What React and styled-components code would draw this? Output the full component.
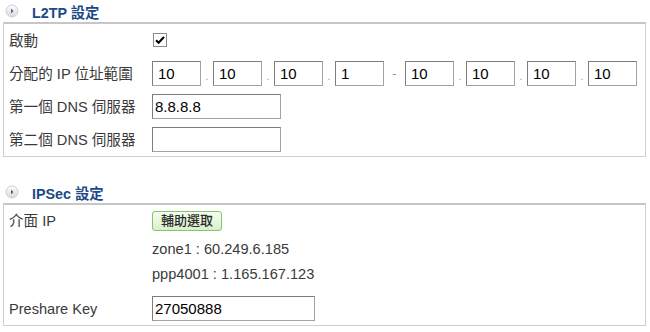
import React from 'react';
import styled, { createGlobalStyle } from 'styled-components';

const GlobalStyle = createGlobalStyle`
  body {
    margin: 0;
    background: #fff;
    font-family: "Liberation Sans", Arial, "Noto Sans CJK TC", sans-serif;
    color: #333;
  }
`

const Page = styled.div`
  width: 650px;
  padding: 0 4px 0 3px;
  box-sizing: border-box;
`

const SectionHeader = styled.div`
  display: flex;
  align-items: center;
  height: 22px;
  margin-top: ${props => props.$first ? '0' : '24px'};
  padding-left: 2px;
`

const Title = styled.h3`
  margin: 0 0 0 13px;
  font-size: 14.3px;
  font-weight: bold;
  color: #1b4a88;
`

const Panel = styled.div`
  border: 1px solid #cfcfcf;
  border-top: 2px solid #c6c6c6;
`

const Row = styled.div`
  display: grid;
  grid-template-columns: 148px 1fr;
  align-items: ${props => props.$top ? 'start' : 'center'};
  height: ${props => props.$top ? 'auto' : '33px'};
  padding: ${props => props.$top ? '6px 0 5px' : '0'};
`

const Label = styled.div`
  padding-left: 5px;
  font-size: 14.6px;
  line-height: 20px;
  color: #3a3a3a;
`

const Field = styled.div`
  display: flex;
  align-items: center;
`

const TextInput = styled.input`
  box-sizing: border-box;
  width: ${props => props.$w}px;
  height: 25px;
  padding: 0 0 0 ${props => props.$pad || 2}px;
  margin: 0;
  border: 1px solid #a3a3a3;
  border-top-color: #7d7d7d;
  border-left-color: #7d7d7d;
  font-family: "Liberation Sans", Arial, sans-serif;
  font-size: 15px;
  color: #000;
  background: #fff;
  outline: none;
`

const Sep = styled.span`
  display: flex;
  justify-content: center;
  align-items: ${props => props.$dash ? 'center' : 'flex-end'};
  width: ${props => props.$dash ? 21 : 12}px;
  height: 25px;
  padding-bottom: ${props => props.$dash ? 0 : 4}px;
  box-sizing: border-box;
  font-size: ${props => props.$dash ? 13 : 10}px;
  color: #999;
`

const CheckBox = styled.span`
  display: flex;
  align-items: center;
  justify-content: center;
  width: 14px;
  height: 14px;
  margin: -2px 0 0 1px;
  box-sizing: border-box;
  border: 1px solid #8a8a8a;
  background: #fff;
`

const HelperButton = styled.button`
  width: 70px;
  height: 20px;
  padding: 0;
  border: 1px solid #86c46d;
  border-radius: 3px;
  background: linear-gradient(#f6fdf1, #d9f0c9);
  font-family: "Liberation Sans", Arial, "Noto Sans CJK TC", sans-serif;
  font-size: 13px;
  font-weight: 500;
  color: #2a2a2a;
  line-height: 18px;
`

const IpList = styled.div`
  margin-top: 6px;
`

const IpLine = styled.div`
  font-size: 14.6px;
  line-height: 25px;
  color: #3a3a3a;
`

const Bullet = () => (
  <svg width="14" height="14" viewBox="0 0 14 14">
    <defs>
      <linearGradient id="bg" x1="0" y1="0" x2="0" y2="1">
        <stop offset="0" stopColor="#ffffff" />
        <stop offset="1" stopColor="#d8d8d8" />
      </linearGradient>
    </defs>
    <circle cx="7" cy="7" r="6" fill="url(#bg)" stroke="#cfcfcf" />
    <path d="M6 4.6 L8.6 7 L6 9.4 Z" fill="#3f6ea8" />
  </svg>
)

const Check = () => (
  <svg width="12" height="12" viewBox="0 0 12 12">
    <path d="M2 6.2 L4.6 8.8 L10 3" fill="none" stroke="#000" strokeWidth="2" />
  </svg>
)

const rangeStart = ['10', '10', '10', '1'];
const rangeEnd = ['10', '10', '10', '10'];

const IpGroup = ({ parts }) => (
  <>
    {parts.map((p, i) => (
      <React.Fragment key={i}>
        {i > 0 && <Sep>.</Sep>}
        <TextInput $w={49} $pad={5} defaultValue={p} />
      </React.Fragment>
    ))}
  </>
)

export default function App() {
  return (
    <Page>
      <GlobalStyle />
      <SectionHeader $first>
        <Bullet />
        <Title>L2TP 設定</Title>
      </SectionHeader>
      <Panel>
        <Row>
          <Label>啟動</Label>
          <Field>
            <CheckBox><Check /></CheckBox>
          </Field>
        </Row>
        <Row>
          <Label>分配的 IP 位址範圍</Label>
          <Field>
            <IpGroup parts={rangeStart} />
            <Sep $dash>-</Sep>
            <IpGroup parts={rangeEnd} />
          </Field>
        </Row>
        <Row>
          <Label>第一個 DNS 伺服器</Label>
          <Field>
            <TextInput $w={129} defaultValue="8.8.8.8" />
          </Field>
        </Row>
        <Row>
          <Label>第二個 DNS 伺服器</Label>
          <Field>
            <TextInput $w={129} defaultValue="" />
          </Field>
        </Row>
      </Panel>

      <SectionHeader>
        <Bullet />
        <Title>IPSec 設定</Title>
      </SectionHeader>
      <Panel>
        <Row $top>
          <Label>介面 IP</Label>
          <div>
            <HelperButton>輔助選取</HelperButton>
            <IpList>
              <IpLine>zone1 : 60.249.6.185</IpLine>
              <IpLine>ppp4001 : 1.165.167.123</IpLine>
            </IpList>
          </div>
        </Row>
        <Row>
          <Label>Preshare Key</Label>
          <Field>
            <TextInput $w={163} defaultValue="27050888" />
          </Field>
        </Row>
      </Panel>
    </Page>
  );
}
